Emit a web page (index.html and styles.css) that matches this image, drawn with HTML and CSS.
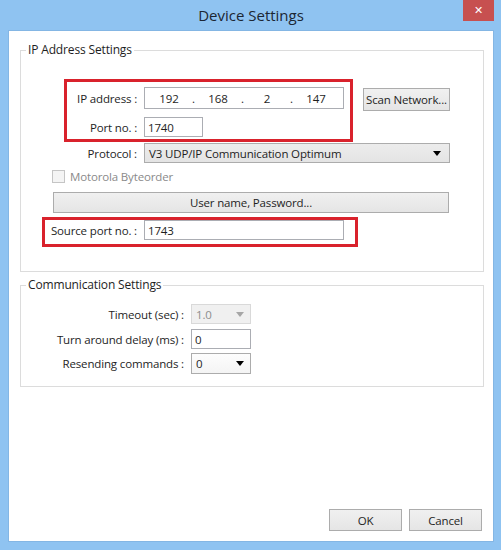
FILE: index.html
```html
<!DOCTYPE html>
<html lang="en">
<head>
    <meta charset="UTF-8">
    <meta name="viewport" content="width=device-width, initial-scale=1.0">
    <title>Device Settings</title>
    <link rel="stylesheet" href="styles.css">
</head>
<body>
    <div class="window">
        <!-- Title bar -->
        <div class="titlebar">
            <span class="title">Device Settings</span>
            <button class="close">&#x2715;</button>
        </div>

        <div class="client">
            <!-- IP Address Settings -->
            <fieldset class="group group-ip">
                <legend>IP Address Settings</legend>

                <div class="ip-top">
                    <div class="redbox redbox-main">
                        <div class="row">
                            <span class="label label-red">IP address :</span>
                            <div class="field ip-field">
                                <span class="octet">192</span><span class="dot">.</span>
                                <span class="octet">168</span><span class="dot">.</span>
                                <span class="octet">2</span><span class="dot">.</span>
                                <span class="octet">147</span>
                            </div>
                        </div>
                        <div class="row row-port">
                            <span class="label label-red">Port no. :</span>
                            <input type="text" class="field port-field" value="1740">
                        </div>
                    </div>
                    <button class="btn btn-scan">Scan Network...</button>
                </div>

                <div class="row row-protocol">
                    <span class="label label-wide">Protocol :</span>
                    <div class="combo combo-protocol">
                        <span>V3 UDP/IP Communication Optimum</span>
                        <svg width="8" height="5" viewBox="0 0 8 5"><path d="M0 0h8L4 5z" fill="#000"/></svg>
                    </div>
                </div>

                <div class="check-row">
                    <span class="checkbox"></span>
                    <span class="check-text">Motorola Byteorder</span>
                </div>

                <button class="btn btn-user">User name, Password...</button>

                <div class="redbox redbox-source">
                    <div class="row">
                        <span class="label label-source">Source port no. :</span>
                        <input type="text" class="field source-field" value="1743">
                    </div>
                </div>
            </fieldset>

            <!-- Communication Settings -->
            <fieldset class="group group-comm">
                <legend>Communication Settings</legend>

                <div class="row row-timeout">
                    <span class="label label-comm">Timeout (sec) :</span>
                    <div class="combo combo-small combo-disabled">
                        <span>1.0</span>
                        <svg width="8" height="5" viewBox="0 0 8 5"><path d="M0 0h8L4 5z" fill="#a6a6a6"/></svg>
                    </div>
                </div>
                <div class="row row-delay">
                    <span class="label label-comm">Turn around delay (ms) :</span>
                    <input type="text" class="field small-field" value="0">
                </div>
                <div class="row row-resend">
                    <span class="label label-comm">Resending commands :</span>
                    <div class="combo combo-small combo-white">
                        <span>0</span>
                        <svg width="8" height="5" viewBox="0 0 8 5"><path d="M0 0h8L4 5z" fill="#000"/></svg>
                    </div>
                </div>
            </fieldset>

            <div class="actions">
                <button class="btn btn-action">OK</button>
                <button class="btn btn-action">Cancel</button>
            </div>
        </div>
    </div>
</body>
</html>
```

FILE: styles.css
```css
* {
    box-sizing: border-box;
}

body {
    margin: 0;
    font-family: 'Open Sans', 'Noto Sans', sans-serif;
    font-size: 11.5px;
    letter-spacing: -0.15px;
    color: #1e1e1e;
}

.window {
    width: 501px;
    height: 550px;
    background: #8fc3f1;
    padding: 0 7px 8px 8px;
    display: flex;
    flex-direction: column;
}

.titlebar {
    height: 30px;
    display: grid;
    grid-template-columns: 1fr auto 1fr;
    align-items: start;
}

.title {
    grid-column: 2;
    font-size: 15px;
    letter-spacing: 0;
    line-height: 30px;
    color: #1c2633;
}

.close {
    grid-column: 3;
    justify-self: end;
    width: 31px;
    height: 21px;
    border: none;
    padding: 0;
    background: #c75050;
    color: #fff;
    font-size: 11px;
    font-weight: bold;
    font-family: 'DejaVu Sans', sans-serif;
}

.client {
    flex: 1;
    background: #fff;
    border: 1px solid #84b6e4;
    display: flex;
    flex-direction: column;
    padding: 11px 9px 10px 11px;
}

.group {
    margin: 0;
    padding: 0;
    min-width: 0;
    border: 1px solid #dcdcdc;
}

.group legend {
    margin-left: 5px;
    padding: 0 2px;
    font-size: 12px;
    line-height: 16px;
}

.group-ip {
    padding-bottom: 24px;
}

.group-comm {
    margin-top: 5px;
    padding-bottom: 12px;
}

.row {
    display: flex;
    align-items: center;
}

.label {
    flex: none;
    text-align: right;
    padding-right: 7px;
    white-space: nowrap;
}

.label-red { width: 77px; }
.label-wide { width: 123px; }
.label-source { width: 99px; }
.label-comm { width: 170px; }

.field {
    height: 20px;
    border: 1px solid #abadb3;
    background: #fff;
    font-family: inherit;
    font-size: 11.5px;
    letter-spacing: inherit;
    color: #1e1e1e;
    padding: 0 3px;
    outline: none;
}

.ip-top {
    display: flex;
    align-items: flex-start;
    margin: 21px 0 0 43px;
}

.redbox {
    border: 3px solid #d9222c;
}

.redbox-main {
    width: 289px;
    padding: 5px 0 2px;
}

.ip-field {
    width: 200px;
    height: 22px;
    display: flex;
    align-items: center;
    padding: 0 0 0 2px;
}

.octet {
    width: 44px;
    text-align: center;
}

.dot {
    width: 5px;
    text-align: center;
}

.row-port {
    margin-top: 8px;
}

.port-field {
    width: 59px;
}

.btn {
    border: 1px solid #acacac;
    background: linear-gradient(#f0f0f0, #e5e5e5);
    font-family: inherit;
    font-size: 11.5px;
    letter-spacing: inherit;
    color: #1e1e1e;
    padding: 0;
    white-space: nowrap;
}

.btn-scan {
    width: 87px;
    height: 23px;
    margin: 9px 0 0 10px;
}

.row-protocol {
    margin-top: 1px;
}

.combo {
    height: 20px;
    border: 1px solid #acacac;
    background: linear-gradient(#ececec, #e4e4e4);
    display: flex;
    align-items: center;
    justify-content: space-between;
    padding: 0 8px 0 4px;
}

.combo-protocol {
    width: 306px;
}

.check-row {
    display: flex;
    align-items: center;
    height: 13px;
    margin: 7px 0 0 31px;
}

.checkbox {
    width: 13px;
    height: 13px;
    border: 1px solid #c5c5c5;
    background: #f4f4f4;
}

.check-text {
    margin-left: 5px;
    color: #8a8a8a;
}

.btn-user {
    display: block;
    width: 396px;
    height: 21px;
    margin: 9px 0 0 32px;
}

.redbox-source {
    width: 316px;
    margin: 4px 0 0 21px;
    padding: 0 0 4px;
}

.source-field {
    width: 200px;
}

.row-timeout {
    margin-top: 11px;
}

.row-delay {
    margin-top: 5px;
}

.row-resend {
    margin-top: 4px;
}

.combo-small {
    width: 60px;
    padding-right: 6px;
}

.combo-disabled {
    background: #f0f0f0;
    border-color: #d9d9d9;
    color: #8d8d8d;
}

.combo-white {
    height: 21px;
    background: linear-gradient(#fdfdfd, #f4f4f4);
}

.small-field {
    width: 60px;
}

.actions {
    margin-top: auto;
    margin-right: 2px;
    display: flex;
    justify-content: flex-end;
    gap: 7px;
}

.btn-action {
    width: 73px;
    height: 22px;
}
```
